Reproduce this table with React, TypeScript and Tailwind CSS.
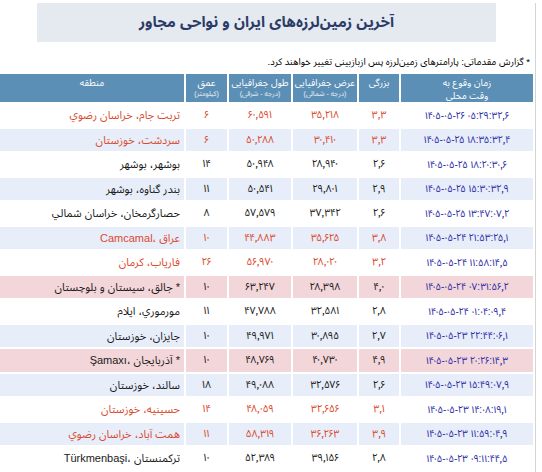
import React from "react";

type Row = {
  region: string;
  depth: string;
  lon: string;
  lat: string;
  mag: string;
  time: string;
  red?: boolean;
  pink?: boolean;
};

const rows: Row[] = [
  { region: "تربت جام، خراسان رضوي", depth: "۶", lon: "۶۰٫۵۹۱", lat: "۳۵٫۲۱۸", mag: "۳٫۳", time: "۱۴۰۵-۰۵-۲۶ ۰۵:۲۹:۳۲٫۶", red: true },
  { region: "سردشت، خوزستان", depth: "۶", lon: "۵۰٫۲۸۸", lat: "۳۰٫۴۱۰", mag: "۳٫۳", time: "۱۴۰۵-۰۵-۲۵ ۱۸:۳۵:۳۲٫۴", red: true },
  { region: "بوشهر، بوشهر", depth: "۱۴", lon: "۵۰٫۹۴۸", lat: "۲۸٫۹۴۰", mag: "۲٫۶", time: "۱۴۰۵-۰۵-۲۵ ۱۸:۲۰:۳۰٫۶" },
  { region: "بندر گناوه، بوشهر", depth: "۱۱", lon: "۵۰٫۵۴۱", lat: "۲۹٫۸۰۱", mag: "۲٫۹", time: "۱۴۰۵-۰۵-۲۵ ۱۵:۳۰:۳۲٫۹" },
  { region: "حصارگرمخان، خراسان شمالي", depth: "۸", lon: "۵۷٫۵۷۹", lat: "۳۷٫۳۴۲", mag: "۲٫۶", time: "۱۴۰۵-۰۵-۲۵ ۱۳:۴۷:۰۷٫۲" },
  { region: "Camcamal، عراق", depth: "۱۰", lon: "۴۴٫۸۸۳", lat: "۳۵٫۶۲۵", mag: "۳٫۸", time: "۱۴۰۵-۰۵-۲۴ ۲۱:۵۳:۲۵٫۱", red: true },
  { region: "فاریاب، کرمان", depth: "۲۶", lon: "۵۶٫۹۷۰", lat: "۲۸٫۰۲۰", mag: "۳٫۲", time: "۱۴۰۵-۰۵-۲۴ ۱۱:۵۸:۱۴٫۵", red: true },
  { region: "جالق، سیستان و بلوچستان *", depth: "۱۰", lon: "۶۳٫۲۴۷", lat: "۲۸٫۳۹۸", mag: "۴٫۰", time: "۱۴۰۵-۰۵-۲۴ ۰۷:۳۱:۵۶٫۲", pink: true },
  { region: "مورموري، ایلام", depth: "۱۱", lon: "۴۷٫۷۸۸", lat: "۳۲٫۵۸۱", mag: "۲٫۸", time: "۱۴۰۵-۰۵-۲۴ ۰۱:۰۴:۰۹٫۴" },
  { region: "جایزان، خوزستان", depth: "۱۰", lon: "۴۹٫۹۷۱", lat: "۳۰٫۸۹۵", mag: "۲٫۷", time: "۱۴۰۵-۰۵-۲۳ ۲۲:۴۴:۰۶٫۱" },
  { region: "Şamaxı، آذربایجان *", depth: "۱۰", lon: "۴۸٫۷۶۹", lat: "۴۰٫۷۳۰", mag: "۴٫۹", time: "۱۴۰۵-۰۵-۲۳ ۲۰:۲۶:۱۴٫۳", pink: true },
  { region: "سالند، خوزستان", depth: "۱۸", lon: "۴۹٫۰۸۸", lat: "۳۲٫۵۷۶", mag: "۲٫۶", time: "۱۴۰۵-۰۵-۲۳ ۱۵:۴۹:۰۷٫۹" },
  { region: "حسینیه، خوزستان", depth: "۱۴", lon: "۴۸٫۰۵۹", lat: "۳۲٫۶۵۶", mag: "۳٫۱", time: "۱۴۰۵-۰۵-۲۳ ۱۴:۰۸:۱۹٫۱", red: true },
  { region: "همت آباد، خراسان رضوي", depth: "۱۱", lon: "۵۸٫۳۱۹", lat: "۳۶٫۲۶۳", mag: "۳٫۹", time: "۱۴۰۵-۰۵-۲۳ ۱۱:۵۹:۰۴٫۹", red: true },
  { region: "Türkmenbaşi، ترکمنستان", depth: "۱۰", lon: "۵۲٫۳۸۹", lat: "۳۹٫۱۵۶", mag: "۲٫۸", time: "۱۴۰۵-۰۵-۲۳ ۰۹:۱۱:۴۴٫۵" },
];

const grid = "grid grid-cols-[184px_41px_62px_64px_40px_132px] gap-x-[2px]";

function HeadCell({ main, sub, main2 }: { main: string; sub?: string; main2?: string }) {
  return (
    <div className="bg-[#5c8fb6] h-[28px] flex flex-col items-center pt-[3px] text-white whitespace-nowrap overflow-hidden">
      <div dir="rtl" className="text-[9.5px] leading-[12px]">{main}</div>
      {main2 && <div dir="rtl" className="text-[9.5px] leading-[13px]">{main2}</div>}
      {sub && <div dir="rtl" className="text-[7px] leading-[10px] text-white/85">{sub}</div>}
    </div>
  );
}

export default function App() {
  return (
    <div
      className="w-[542px] h-[472px] bg-white overflow-hidden"
      style={{ fontFamily: '"Liberation Sans", "Noto Sans Arabic UI", "Noto Sans Arabic", "DejaVu Sans", sans-serif' }}
    >
      <div className="w-[536px] h-full border-r border-[#d4d4d4]">
        <div className="ml-[37px] mt-[3px] w-[459px] h-[39px] bg-[#e5e9f0] flex items-center justify-center">
          <span dir="rtl" className="text-[15px] font-bold text-[#2b3b66] whitespace-nowrap">
            آخرین زمین‌لرزه‌های ایران و نواحی مجاور
          </span>
        </div>
        <div dir="rtl" className="mt-[13px] pr-[5px] text-[9.5px] leading-[14px] text-black whitespace-nowrap">
          * گزارش مقدماتی: پارامترهای زمین‌لرزه پس ازبازبینی تغییر خواهند کرد.
        </div>
        <div dir="ltr" className="mt-[5px] flex flex-col gap-y-[2px]">
          <div className={grid}>
            <HeadCell main="منطقه" />
            <HeadCell main="عمق" sub="(کیلومتر)" />
            <HeadCell main="طول جغرافیایی" sub="(درجه - شرقی)" />
            <HeadCell main="عرض جغرافیایی" sub="(درجه - شمالی)" />
            <HeadCell main="بزرگی" />
            <HeadCell main="زمان وقوع به" main2="وقت محلی" />
          </div>
          {rows.map((r, i) => {
            const bg = r.pink ? "bg-[#f3d6d9]" : i % 2 === 1 ? "bg-[#e7eefa]" : "bg-white";
            const color = r.red ? "text-[#dc4a2e]" : "text-[#1a1a1a]";
            const cell = `${bg} h-[22.5px] flex items-center text-[10.5px] whitespace-nowrap ${color}`;
            return (
              <div key={i} className={grid}>
                <div className={`${cell} justify-end pr-[4px] text-[11px]`}>
                  <span dir="ltr">{r.region}</span>
                </div>
                <div className={`${cell} justify-center`}>{r.depth}</div>
                <div className={`${cell} justify-center`}>{r.lon}</div>
                <div className={`${cell} justify-center`}>{r.lat}</div>
                <div className={`${cell} justify-center`}>{r.mag}</div>
                <div className={`${bg} h-[22.5px] flex items-center justify-center text-[10px] whitespace-nowrap text-[#2d2da6]`}>
                  <span dir="ltr">{r.time}</span>
                </div>
              </div>
            );
          })}
        </div>
      </div>
    </div>
  );
}
